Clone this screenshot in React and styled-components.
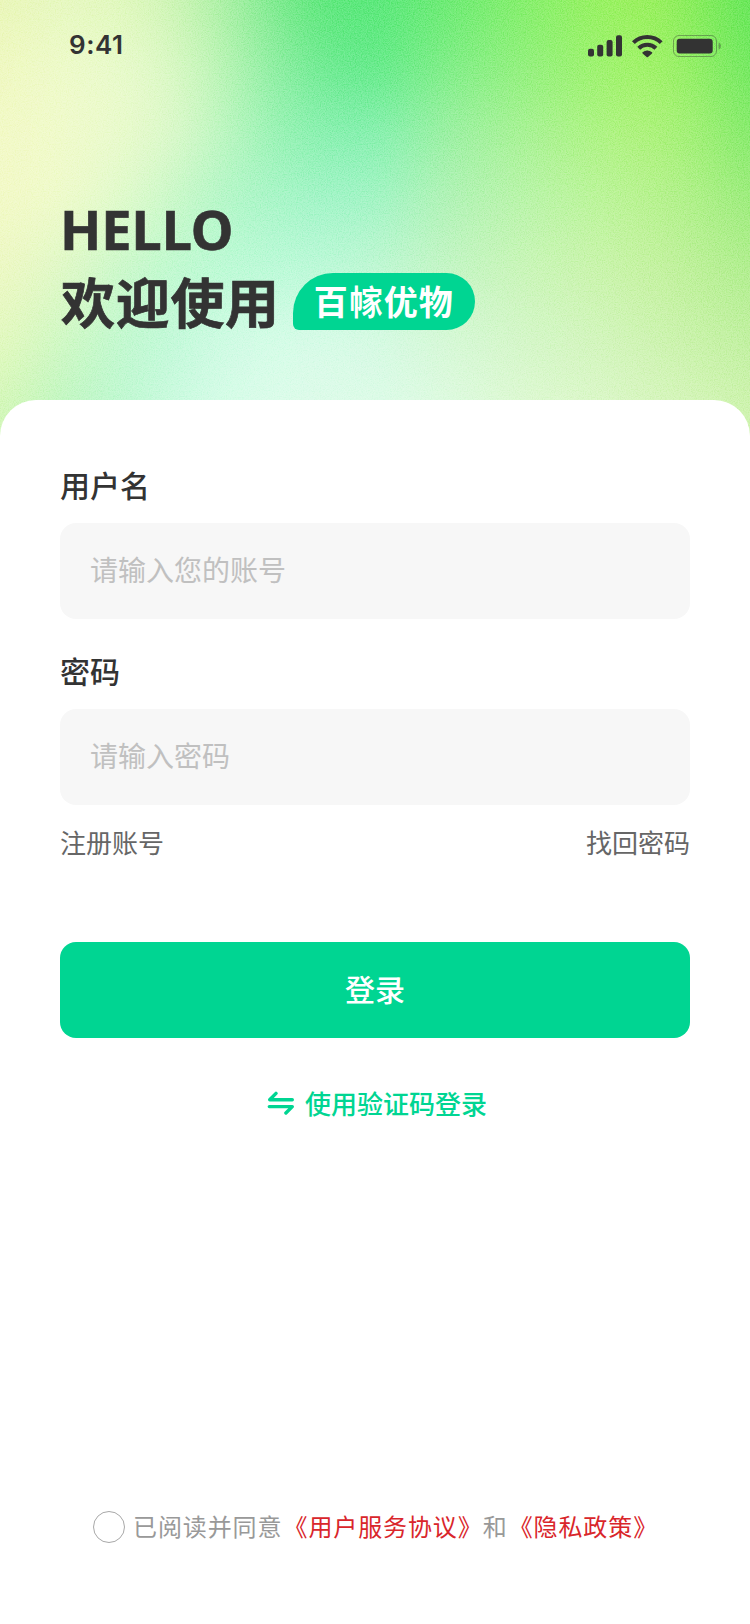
import React from "react";
import styled, { createGlobalStyle } from "styled-components";

const GlobalStyle = createGlobalStyle`
  * { box-sizing: border-box; }
  body {
    margin: 0;
    background: #fff;
    color: #333;
    font-family: "Noto Sans CJK SC", sans-serif;
  }
`;

const Screen = styled.div`
  position: relative;
  width: 750px;
  height: 1624px;
  display: flex;
  flex-direction: column;
  overflow: hidden;
`;

const Backdrop = styled.svg`
  position: absolute;
  inset: 0 0 auto 0;
  z-index: -1;
`;

const StatusBar = styled.header`
  height: 92px;
  padding: 0 29px 0 69px;
  display: flex;
  align-items: center;
  justify-content: space-between;
`;

const Clock = styled.time`
  font: 600 26px/30px Inter, sans-serif;
  letter-spacing: 0.5px;
  margin-top: -2px;
`;

const Hero = styled.section`
  height: 308px;
  padding: 101px 60px 0;
`;

const Greeting = styled.p`
  margin: 0;
  font: 700 54px/72px "Noto Sans", sans-serif;
  -webkit-text-stroke: 0.6px currentColor;
`;

const Title = styled.h1`
  margin: 0;
  padding: 0 0 1px 1px;
  font-size: 54px;
  line-height: 72px;
  font-weight: 700;
  letter-spacing: 0.7px;
  -webkit-text-stroke: 0.7px currentColor;
`;

const TitleRow = styled.div`
  display: flex;
  align-items: center;
`;

const Badge = styled.span`
  width: 182px;
  height: 57px;
  margin: 0 0 0 13px;
  padding-bottom: 1px;
  display: flex;
  align-items: center;
  justify-content: center;
  border-radius: 40px 28.5px 28.5px 6px;
  background: #00d592;
  color: #fff;
  font-size: 34px;
  line-height: 50px;
  font-weight: 700;
  letter-spacing: 1px;
`;

const Sheet = styled.main`
  flex: 1;
  padding: 59px 60px 0;
  display: flex;
  flex-direction: column;
  border-radius: 36px 36px 0 0;
  background: #fff;
`;

const Field = styled.label`
  display: flex;
  flex-direction: column;
  gap: 14px;
  margin-bottom: ${(p) => p.$after};
`;

const FieldName = styled.span`
  font-size: 30px;
  line-height: 50px;
  font-weight: 500;
`;

const Input = styled.input`
  width: 100%;
  height: 96px;
  padding: 0 30px 4px;
  border: 0;
  border-radius: 16px;
  outline: 0;
  background: #f7f7f7;
  font: 400 28px/40px "Noto Sans CJK SC", sans-serif;
  &::placeholder { color: #c0c0c0; opacity: 1; }
`;

const Links = styled.nav`
  display: flex;
  justify-content: space-between;
`;

const TextLink = styled.a`
  font-size: 26px;
  line-height: 38px;
  color: #666;
`;

const LoginButton = styled.button`
  height: 96px;
  margin-top: 81px;
  padding: 0 0 5px;
  border: 0;
  border-radius: 16px;
  background: #00d592;
  color: #fff;
  font: 500 30px/44px "Noto Sans CJK SC", sans-serif;
`;

const SwitchLogin = styled.a`
  margin: 46px 0 0 4px;
  display: flex;
  align-items: center;
  justify-content: center;
  gap: 10px;
  color: #00d592;
  font-size: 26px;
  line-height: 38px;
  font-weight: 500;
`;

const Agreement = styled.footer`
  height: 38px;
  margin: auto 0 78px;
  padding-left: 33px;
  display: flex;
  align-items: center;
  font-size: 24px;
  letter-spacing: 0.9px;
  color: #999;
  white-space: nowrap;
`;

const Statement = styled.span`
  margin-top: -4px;
`;

const Radio = styled.span`
  width: 32px;
  height: 32px;
  margin-right: 8px;
  border: 1.5px solid #a8a8a8;
  border-radius: 50%;
`;

const Policy = styled.a`
  margin-left: 1.2px;
  letter-spacing: 0.88px;
  color: #d9262b;
`;

const COLUMNS = [0, 60, 125, 175, 225, 275, 325, 375, 450, 525, 600, 650, 700, 750];
const MESH = [
  { y: 0, colors: "e9f6b8 e6f8c0 e0f8bc ccf4b4 aaf0a4 7cea8e 5ae778 58e87a 6ceb72 84ef6a 98f160 9af05c 84ec5a 62e658" },
  { y: 65, colors: "eff8c0 eefaca e8facc daf8c4 b8f4b4 8eeea2 6cea90 60ea88 80ee86 92f07c 9cf26c a2f266 90ee64 70e860" },
  { y: 130, colors: "f2f9c6 f0facb eafacc dcf8ca bcf6c0 98f2b4 86f0ae 84f0b0 9cf0a2 a8f294 aef382 aef27a a0f074 82ea6a" },
  { y: 200, colors: "f2f9c6 f0facb e0facc c8f8c8 b2f6c8 a8f5c8 a2f4c8 a2f4c6 b2f2b6 baf4aa bcf49a b8f290 aef088 9cec7c" },
  { y: 270, colors: "eef8c4 e0f8c6 c8f8ca bef9d0 bcfad6 bcfad8 bcf9d8 c0f7d4 c4f5c4 caf5b8 caf4ac c6f2a2 bcf098 b0ee8e" },
  { y: 340, colors: "e4f8be d0f8c4 c0f8d0 c2f9da d0fbe4 d6fce8 d8fbe8 d6fae4 d6f8d6 d4f6c8 d2f5bc cef3b2 c8f2a8 c0f0a0" },
  { y: 410, colors: "d4f7b8 bef6c0 bef8d2 ccfae0 d6fce8 dcfcea defbe8 dcfbe8 defae0 def9d2 dcf7ca d8f6c0 d4f5b8 cef3ae" },
];
const BLEED = { x: -80, y: -80, width: 910, height: 610 };

function MeshBackdrop() {
  return (
    <Backdrop width="750" height="450" viewBox="0 0 750 450" aria-hidden="true">
      <defs>
        {MESH.map((row, i) => (
          <React.Fragment key={row.y}>
            <linearGradient id={`row${i}`} gradientUnits="userSpaceOnUse" x1="0" x2="750" y1="0" y2="0">
              {row.colors.split(" ").map((c, k) => (
                <stop key={k} offset={COLUMNS[k] / 750} stopColor={`#${c}`} />
              ))}
            </linearGradient>
            {i > 0 && (
              <>
                <linearGradient id={`fade${i}`} gradientUnits="userSpaceOnUse" x1="0" x2="0" y1={MESH[i - 1].y} y2={row.y}>
                  <stop offset="0" stopColor="#fff" stopOpacity="0" />
                  <stop offset="1" stopColor="#fff" />
                </linearGradient>
                <mask id={`mask${i}`} maskUnits="userSpaceOnUse" {...BLEED} style={{ maskType: "alpha" }}>
                  <rect {...BLEED} fill={`url(#fade${i})`} />
                </mask>
              </>
            )}
          </React.Fragment>
        ))}
        <filter id="smooth" filterUnits="userSpaceOnUse" {...BLEED} colorInterpolationFilters="sRGB">
          <feGaussianBlur stdDeviation="20" />
        </filter>
        <filter id="grain" x="0" y="0" width="100%" height="100%" colorInterpolationFilters="sRGB">
          <feTurbulence type="fractalNoise" baseFrequency="0.83" numOctaves="2" seed="4" />
          <feColorMatrix type="matrix" values="2.2 0 0 0 -0.52  2.2 0 0 0 -0.52  2.2 0 0 0 -0.52  0 0 0 0 1" />
        </filter>
      </defs>
      <g filter="url(#smooth)">
        {MESH.map((row, i) => (
          <rect key={row.y} {...BLEED} fill={`url(#row${i})`} mask={i > 0 ? `url(#mask${i})` : undefined} />
        ))}
      </g>
      <rect width="750" height="450" filter="url(#grain)" opacity="0.26" style={{ mixBlendMode: "soft-light" }} />
    </Backdrop>
  );
}

function StatusIcons() {
  return (
    <svg width="134" height="24" viewBox="587 34 134 24" fill="#333" aria-hidden="true">
      <rect x="588" y="48.7" width="6" height="7.8" rx="2" />
      <rect x="597.2" y="44.7" width="6" height="11.8" rx="2" />
      <rect x="606.6" y="40" width="6" height="16.5" rx="2" />
      <rect x="616" y="35.2" width="6" height="21.3" rx="2" />
      <g fill="none" stroke="#333" strokeWidth="4.1">
        <path d="M633.4 42.6a20 20 0 0 1 27.8 0" />
        <path d="M638.7 48.2a12.5 12.5 0 0 1 17.2 0" />
      </g>
      <path d="M642.6 52.3a7 7 0 0 1 9.4 0q.7.6 0 1.2l-4 3.4q-.7.5-1.4 0l-4-3.4q-.7-.6 0-1.2z" />
      <rect x="673.5" y="35.5" width="43" height="21" rx="5.5" fill="none" stroke="#333" strokeOpacity="0.4" />
      <rect x="676.7" y="38.8" width="36" height="14.8" rx="3" />
      <path d="M718.6 42.5c3 1 3 6 0 7z" fillOpacity="0.4" />
    </svg>
  );
}

function SwapIcon() {
  return (
    <svg width="28" height="24" viewBox="0 0 28 24" fill="none" stroke="currentColor" strokeWidth="3.4" strokeLinecap="round" strokeLinejoin="round" aria-hidden="true">
      <path d="M25.3 8.8H2.7L9 2.4" />
      <path d="M2.3 15.6H25.3L18.9 22" />
    </svg>
  );
}

export default function App() {
  return (
    <Screen>
      <GlobalStyle />
      <MeshBackdrop />
      <StatusBar>
        <Clock>9:41</Clock>
        <StatusIcons />
      </StatusBar>
      <Hero>
        <Greeting>HELLO</Greeting>
        <TitleRow>
          <Title>欢迎使用</Title>
          <Badge>百幏优物</Badge>
        </TitleRow>
      </Hero>
      <Sheet>
        <Field $after="26px">
          <FieldName>用户名</FieldName>
          <Input placeholder="请输入您的账号" />
        </Field>
        <Field $after="18px">
          <FieldName>密码</FieldName>
          <Input type="password" placeholder="请输入密码" />
        </Field>
        <Links>
          <TextLink>注册账号</TextLink>
          <TextLink>找回密码</TextLink>
        </Links>
        <LoginButton>登录</LoginButton>
        <SwitchLogin>
          <SwapIcon />
          使用验证码登录
        </SwitchLogin>
        <Agreement>
          <Radio />
          <Statement>
            已阅读并同意
            <Policy>《用户服务协议》</Policy>
            和
            <Policy>《隐私政策》</Policy>
          </Statement>
        </Agreement>
      </Sheet>
    </Screen>
  );
}
